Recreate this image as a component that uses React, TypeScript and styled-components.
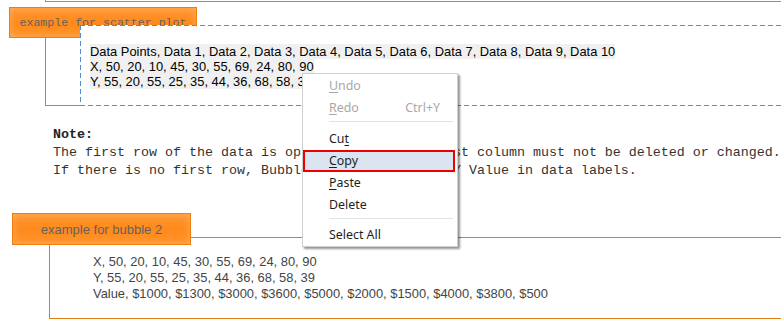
import React from "react";
import styled, { createGlobalStyle } from "styled-components";

const ORANGE = "#e07d14";

const Global = createGlobalStyle`
  html, body { margin: 0; padding: 0; background: #fff; }
  body { overflow: hidden; }
`;

const Page = styled.div`
  position: relative;
  width: 781px;
  height: 320px;
  overflow: hidden;
  background: #fff;
`;

const PrevFrame = styled.div`
  margin-left: 45px;
  margin-right: -20px;
  height: 1px;
  border-left: 1px solid ${ORANGE};
  border-bottom: 1px solid ${ORANGE};
`;

const Section = styled.section<{ $top: number }>`
  margin-top: ${(p) => p.$top}px;
`;

const Tab = styled.div<{ $left: number; $width: number; $height: number; $mono?: boolean }>`
  position: relative;
  z-index: 1;
  box-sizing: border-box;
  display: flex;
  align-items: center;
  justify-content: center;
  margin-left: ${(p) => p.$left}px;
  width: ${(p) => p.$width}px;
  height: ${(p) => p.$height}px;
  background: linear-gradient(#ff9530, #ff8a1c 50%, #ff9126);
  border: 1px solid #f07e0a;
  box-shadow: inset 0 0 8px rgba(255, 200, 140, 0.55);
  color: #636363;
  font-family: ${(p) => (p.$mono ? '"Liberation Mono", monospace' : '"Liberation Sans", Arial, sans-serif')};
  font-size: ${(p) => (p.$mono ? "11.6px" : "13px")};
  white-space: nowrap;
`;

const Frame = styled.div<{ $left: number; $lift: number; $pad: string }>`
  margin-left: ${(p) => p.$left}px;
  margin-right: -20px;
  margin-top: -${(p) => p.$lift}px;
  border: 1px solid ${ORANGE};
  padding: ${(p) => p.$pad};
`;

const BLUE = "#4d8fd6";

const DashedPanel = styled.div`
  position: relative;
  z-index: 2;
  margin: -7px -20px -1px 34px;
  padding: 19px 0 17px 10px;
  background-color: #fff;
  background-image:
    linear-gradient(to right, ${BLUE} 5px, transparent 5px),
    linear-gradient(to right, ${BLUE} 5px, transparent 5px),
    linear-gradient(to bottom, ${BLUE} 5px, transparent 5px);
  background-size: 8px 1px, 8px 1px, 1px 8px;
  background-position: 0 0, 0 100%, 0 0;
  background-repeat: repeat-x, repeat-x, repeat-y;
  font-family: "Liberation Sans", Arial, sans-serif;
  font-size: 12.9px;
  line-height: 15px;
  color: #000;
`;

const DataLine = styled.div`
  white-space: pre;
`;

const Selected = styled.span`
  background: #f0f0f0;
`;

const Note = styled.div`
  margin: 20px 0 0 53px;
  font-family: "Liberation Mono", monospace;
  font-size: 13.333px;
  line-height: 18px;
  color: #333;
  white-space: pre;
`;

const NoteTitle = styled.div`
  font-weight: bold;
  color: #222;
`;

const PlainData = styled.div`
  font-family: "Liberation Sans", Arial, sans-serif;
  font-size: 12.9px;
  line-height: 16px;
  color: #444;
  white-space: pre;
`;

const Menu = styled.div`
  position: absolute;
  z-index: 10;
  left: 302px;
  top: 73px;
  box-sizing: border-box;
  width: 156px;
  padding-top: 1px;
  background: #fff;
  border: 1px solid #cfcfcf;
  box-shadow: 2px 2px 2px rgba(0, 0, 0, 0.42);
  font-family: "Noto Sans", "Open Sans", sans-serif;
  font-size: 12.4px;
`;

const MenuItem = styled.div<{ $disabled?: boolean; $active?: boolean }>`
  display: flex;
  justify-content: space-between;
  height: 22px;
  line-height: 22px;
  margin-right: 2px;
  padding: 0 15px 0 26px;
  color: ${(p) => (p.$disabled ? "#a8a8a8" : "#1e1e1e")};
  background: ${(p) => (p.$active ? "#dae5f1" : "transparent")};
  outline: ${(p) => (p.$active ? "2px solid #ee0000" : "none")};
  outline-offset: -2px;
`;

const Key = styled.u`
  text-decoration: underline;
  text-underline-offset: 2px;
`;

const Separator = styled.div<{ $before: number; $after: number }>`
  height: 1px;
  background: #e2e2e2;
  margin: ${(p) => p.$before}px 4px ${(p) => p.$after}px 26px;
`;

export default function App() {
  return (
    <Page>
      <Global />
      <PrevFrame />

      <Section $top={5}>
        <Tab $left={9} $width={188} $height={31} $mono>
          example for scatter plot
        </Tab>
        <Frame $left={45} $lift={7} $pad="0">
          <DashedPanel>
            <DataLine>
              <Selected>Data Points, Data 1, Data 2, Data 3, Data 4, Data 5, Data 6, Data 7, Data 8, Data 9, Data 10</Selected>
            </DataLine>
            <DataLine>
              <Selected>X, 50, 20, 10, 45, 30, 55, 69, 24, 80, 90</Selected>
            </DataLine>
            <DataLine>
              <Selected>Y, 55, 20, 55, 25, 35, 44, 36, 68, 58, 39</Selected>
            </DataLine>
          </DashedPanel>
        </Frame>
      </Section>

      <Note>
        <NoteTitle>Note:</NoteTitle>
        <div>The first row of the data is optional, but the first column must not be deleted or changed.</div>
        <div>If there is no first row, Bubble would show X and Y Value in data labels.</div>
      </Note>

      <Section $top={33}>
        <Tab $left={12} $width={179} $height={32}>
          example for bubble 2
        </Tab>
        <Frame $left={49} $lift={8} $pad="16px 0 16px 43px">
          <PlainData>X, 50, 20, 10, 45, 30, 55, 69, 24, 80, 90</PlainData>
          <PlainData>Y, 55, 20, 55, 25, 35, 44, 36, 68, 58, 39</PlainData>
          <PlainData>Value, $1000, $1300, $3000, $3600, $5000, $2000, $1500, $4000, $3800, $500</PlainData>
        </Frame>
      </Section>

      <Menu>
        <MenuItem $disabled>
          <span><Key>U</Key>ndo</span>
        </MenuItem>
        <MenuItem $disabled>
          <span><Key>R</Key>edo</span>
          <span>Ctrl+Y</span>
        </MenuItem>
        <Separator $before={2} $after={6} />
        <MenuItem>
          <span>Cu<Key>t</Key></span>
        </MenuItem>
        <MenuItem $active>
          <span><Key>C</Key>opy</span>
        </MenuItem>
        <MenuItem>
          <span><Key>P</Key>aste</span>
        </MenuItem>
        <MenuItem>
          <span>Delete</span>
        </MenuItem>
        <Separator $before={2} $after={5} />
        <MenuItem>
          <span>Select All</span>
        </MenuItem>
      </Menu>
    </Page>
  );
}
